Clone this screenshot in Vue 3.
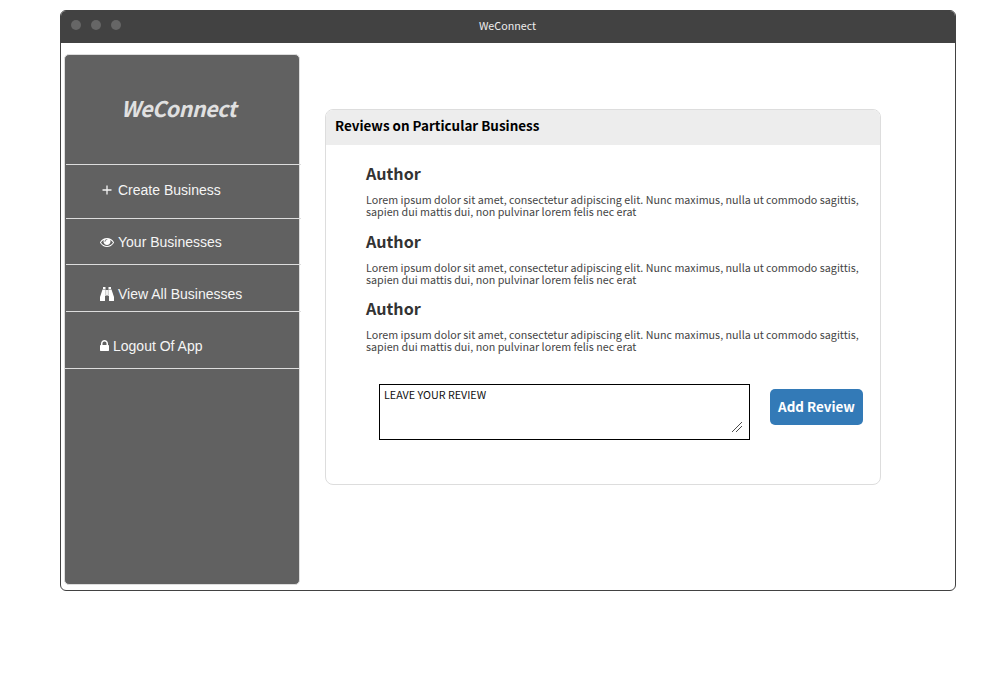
<script setup>
const reviews = ['Author', 'Author', 'Author']
</script>

<template>
  <div class="window">
    <header class="titlebar">
      <div class="dots"><i></i><i></i><i></i></div>
      <span class="title">WeConnect</span>
    </header>
    <div class="body">
      <aside class="sidebar">
        <div class="brand"><span>WeConnect</span></div>
        <nav>
          <a class="item create">
            <svg class="plus" width="10" height="10" viewBox="0 0 10 10"><path d="M5 0.500v9M0.500 5h9" stroke="#f5f5f5" stroke-width="1.300" fill="none" /></svg>
            <span>Create Business</span>
          </a>
          <a class="item yours">
            <svg width="14" height="14" viewBox="0 0 1792 1792"><path fill="#fff" d="M1664 960q-152-236-381-353 61 104 61 225 0 185-131.500 316.500t-316.500 131.500-316.500-131.500-131.500-316.500q0-121 61-225-229 117-381 353 133 205 333.500 326.500t434.500 121.500 434.500-121.500 333.500-326.500zm-720-384q0-20-14-34t-34-14q-125 0-214.500 89.500t-89.500 214.500q0 20 14 34t34 14 34-14 14-34q0-86 61-147t147-61q20 0 34-14t14-34zm848 384q0 34-20 69-140 230-376.500 368.500t-499.500 138.500-499.500-139-376.500-368q-20-35-20-69t20-69q140-229 376.500-368t499.500-139 499.500 139 376.500 368q20 35 20 69z" /></svg>
            <span>Your Businesses</span>
          </a>
          <a class="item all">
            <svg width="14" height="14" viewBox="0 0 14 14"><path fill="#fff" d="M3 0h2.500v2H3zM8.500 0H11v2H8.500zM2.500 2.500h3.200V9H5v4.500q0 .5-.5.500h-4Q0 14 0 13.500V10zM8.300 2.500h3.200L14 10v3.500q0 .5-.5.500h-4q-.5 0-.5-.5V9h-.7zM6.100 3h1.800v5.500H6.100z" /></svg>
            <span>View All Businesses</span>
          </a>
          <a class="item logout">
            <svg width="9" height="11" viewBox="320 128 1152 1408"><path fill="#fff" d="M640 768h512v-192q0-106-75-181t-181-75-181 75-75 181v192zm832 96v576q0 40-28 68t-68 28h-960q-40 0-68-28t-28-68v-576q0-40 28-68t68-28h32v-192q0-184 132-316t316-132 316 132 132 316v192h32q40 0 68 28t28 68z" /></svg>
            <span>Logout Of App</span>
          </a>
        </nav>
      </aside>
      <main class="card">
        <h1>Reviews on Particular Business</h1>
        <section class="reviews">
          <article v-for="(name, i) in reviews" :key="i">
            <h2>{{ name }}</h2>
            <p>Lorem ipsum dolor sit amet, consectetur adipiscing elit. Nunc maximus, nulla ut commodo sagittis,<br />sapien dui mattis dui, non pulvinar lorem felis nec erat</p>
          </article>
        </section>
        <div class="form">
          <div class="field">
            <span>LEAVE YOUR REVIEW</span>
            <svg class="grip" width="10" height="10" viewBox="0 0 10 10"><path d="M0 10L10 0M4 10L10 4" stroke="#000" stroke-width="0.700" fill="none" shape-rendering="crispEdges" /></svg>
          </div>
          <button>Add Review</button>
        </div>
      </main>
    </div>
  </div>
</template>

<style>
body { background: #fff; }
</style>

<style scoped>
* { box-sizing: border-box; }
.window {
  width: 896px;
  height: 581px;
  margin: 10px 0 0 60px;
  border: 1px solid #424242;
  border-radius: 6px;
  overflow: hidden;
  font-family: "Noto Sans CJK SC", "Noto Sans", sans-serif;
}
.titlebar {
  height: 32px;
  background: #424242;
  display: grid;
  grid-template-columns: 1fr auto 1fr;
  align-items: center;
}
.dots { display: flex; gap: 10px; padding: 0 0 4px 10.4px; }
.dots i { width: 10px; height: 10px; border-radius: 50%; background: #666; }
.title { color: #eee; font-size: 10.74px; line-height: 16px; padding: 0 1px 2px 0; }
.body { display: flex; align-items: flex-start; }
.sidebar {
  width: 236px;
  height: 531px;
  margin: 11px 0 0 3px;
  background: #616161;
  border: 1px solid #ddd;
  border-radius: 5px;
  color: #f5f5f5;
}
.brand {
  height: 110px;
  margin: 0 -2px 0 1px;
  border-bottom: 1px solid #ddd;
  display: flex;
  justify-content: center;
  padding: 37px 10px 0 0;
  color: #e0e0e0;
  font-size: 21.48px;
  line-height: 32px;
  letter-spacing: -0.5px;
  font-weight: 700;
  font-style: italic;
}
.item {
  display: flex;
  align-items: flex-start;
  gap: 4px;
  margin: 0 -2px 0 1px;
  padding-left: 34px;
  border-bottom: 1px solid #ddd;
  font-family: "Liberation Sans", Arial, sans-serif;
  font-size: 14px;
  line-height: 16px;
  white-space: nowrap;
}
.create { height: 54px; padding: 17px 0 0 36px; gap: 6px; }
.plus { margin-top: 3px; }
.yours { height: 46px; padding-top: 15px; }
.yours svg { margin-top: 1px; }
.all { height: 47px; padding-top: 21px; }
.all svg { margin-top: 1px; }
.logout { height: 57px; margin: 0; padding: 26px 0 0 35px; }
.logout svg { margin-top: 2px; }
.card {
  width: 556px;
  height: 376px;
  margin: 66px 0 0 25px;
  border: 1px solid #ddd;
  border-radius: 8px;
  overflow: hidden;
}
h1 {
  height: 35px;
  margin: 0;
  padding-left: 9px;
  background: #ededed;
  color: #000;
  font-size: 13.43px;
  line-height: 31px;
  font-weight: 700;
}
.reviews { padding: 16px 0 0 40px; }
article { height: 67.600px; }
h2 { margin: 0; font-size: 16.12px; line-height: 24px; font-weight: 700; color: #333; }
p { margin: 9px 0 0; font-size: 10.74px; line-height: 12px; color: #444; white-space: nowrap; }
.form { display: flex; align-items: flex-start; gap: 20px; padding: 20px 0 0 53px; }
.field {
  width: 371px;
  height: 56px;
  border: 1px solid #000;
  display: flex;
  justify-content: space-between;
  padding: 2px 7px 7px 4px;
  font-size: 10.74px;
  line-height: 16px;
  color: #111;
}
.grip { align-self: flex-end; }
button {
  width: 93px;
  height: 36px;
  margin: 5px 0 0;
  padding: 0 0 2px;
  border: 0;
  border-radius: 5px;
  background: #337ab7;
  color: #fff;
  font: 700 13.43px/34px "Noto Sans CJK SC", "Noto Sans", sans-serif;
}
</style>
